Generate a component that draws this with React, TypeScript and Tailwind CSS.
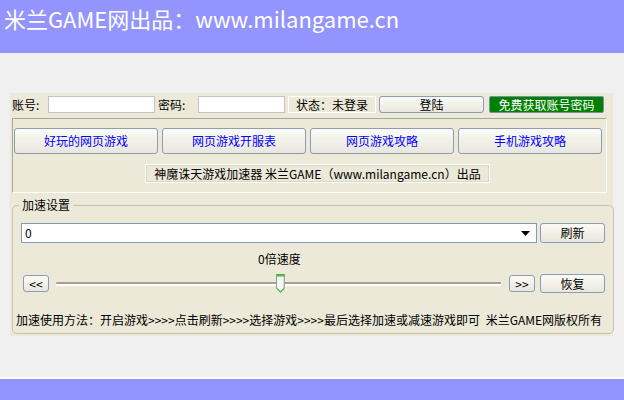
import React from 'react';

const font = { fontFamily: '"Noto Sans CJK SC", "Liberation Sans", sans-serif' };

const xpButton =
  'flex items-center justify-center rounded-[3px] border border-[#8A9CB6] bg-gradient-to-b from-[#FBFAF6] to-[#E9E7DC] text-[12px] leading-none';

const SliderThumb: React.FC = () => (
  <svg width="11" height="21" viewBox="0 0 11 21" className="shrink-0">
    <path d="M1.5 1.5 H9.5 V15 L5.5 19.5 L1.5 15 Z" fill="#F7F7F4" stroke="#8E9C8A" strokeWidth="1" />
    <rect x="1.5" y="1" width="8" height="2.5" fill="#3FBF3F" />
    <path d="M2 15.5 L5.5 19 L9 15.5" fill="none" stroke="#4CC24C" strokeWidth="1.2" />
    <line x1="9" y1="3.5" x2="9" y2="15" stroke="#B9B9A9" />
  </svg>
);

const App: React.FC = () => {
  const links = ['好玩的网页游戏', '网页游戏开服表', '网页游戏攻略', '手机游戏攻略'];

  return (
    <div className="w-[624px] h-[400px] bg-[#F0F0F0] flex flex-col overflow-hidden" style={font}>
      {/* top banner */}
      <div className="h-[53px] bg-[#9494FF] pl-[4px] pt-[3px] text-white text-[22px] leading-[30px] shrink-0">
        米兰GAME网出品：www.milangame.cn
      </div>

      {/* main panel */}
      <div className="mt-[40px] ml-[10px] w-[603px] h-[243px] bg-[#ECE9D8] text-black shrink-0">
        {/* login row */}
        <div className="flex items-center h-[17px] mt-[3px] text-[12px]">
          <span className="w-[38px] pl-[2px] leading-none">账号:</span>
          <div className="w-[107px] h-[17px] bg-white border border-[#C3C3C3]" />
          <span className="w-[43px] pl-[3px] leading-none">密码:</span>
          <div className="w-[87px] h-[17px] bg-white border border-[#C3C3C3]" />
          <div className="ml-[3px] w-[88px] h-[17px] border border-white flex items-center justify-center leading-none">
            状态：未登录
          </div>
          <div className={`${xpButton} ml-[3px] w-[105px] h-[17px]`}>登陆</div>
          <div className="ml-[5px] w-[115px] h-[17px] rounded-[2px] border border-[#7B8FA8] bg-[#008000] text-white flex items-center justify-center leading-none">
            免费获取账号密码
          </div>
        </div>

        {/* link buttons */}
        <div className="ml-[2px] mt-[5px] w-[595px] h-[75px] border border-t-[#A8A899] border-l-[#A8A899] border-r-white border-b-white">
          <div className="flex gap-[4px] mt-[9px] ml-[1px]">
            {links.map((t) => (
              <div key={t} className={`${xpButton} w-[144px] h-[26px] text-[#0000FF]`}>
                {t}
              </div>
            ))}
          </div>
          <div className="ml-[132px] mt-[10px] w-[345px] h-[19px] border border-white shadow-[inset_0_0_0_1px_#DAD7C8] flex items-center justify-center text-[12px] leading-none">
            神魔诛天游戏加速器 米兰GAME（www.milangame.cn）出品
          </div>
        </div>

        {/* speed settings */}
        <fieldset className="ml-[2px] mt-[5px] w-[595px] h-[136px] border border-[#C5C2B2] rounded-[5px] px-[8px] text-[12px]">
          <legend className="-ml-[2px] px-[3px] leading-[14px]">加速设置</legend>

          <div className="flex mt-[11px]">
            <div className="w-[516px] h-[20px] bg-white border border-[#7F9DB9] flex items-center justify-between pl-[3px] pr-[6px] leading-none">
              <span>0</span>
              <svg width="9" height="5" viewBox="0 0 9 5">
                <path d="M0 0 H9 L4.5 5 Z" fill="#000" />
              </svg>
            </div>
            <div className={`${xpButton} ml-[3px] w-[65px] h-[20px]`}>刷新</div>
          </div>

          <div className="mt-[9px] h-[14px] pl-[237px] leading-[14px]">0倍速度</div>

          <div className="flex items-center mt-[7px] h-[21px]">
            <div className={`${xpButton} ml-[2px] w-[26px] h-[17px] text-[11px]`}>&lt;&lt;</div>
            {/* track */}
            <div className="ml-[7px] w-[445px] h-[21px] flex items-center relative">
              <div className="w-full flex flex-col">
                <div className="h-[2px] bg-[#A3A393] rounded-l-[1px]" />
                <div className="h-[2px] bg-white" />
              </div>
              <div className="absolute left-[219px] top-0">
                <SliderThumb />
              </div>
            </div>
            <div className={`${xpButton} ml-[8px] w-[26px] h-[17px] text-[11px]`}>&gt;&gt;</div>
            <div className={`${xpButton} ml-[5px] w-[65px] h-[19px]`}>恢复</div>
          </div>

          <div className="flex justify-between mt-[19px] -ml-[5px] -mr-[5px] pr-[8px] leading-[14px] whitespace-nowrap">
            <span>加速使用方法：开启游戏&gt;&gt;&gt;&gt;点击刷新&gt;&gt;&gt;&gt;选择游戏&gt;&gt;&gt;&gt;最后选择加速或减速游戏即可</span>
            <span>米兰GAME网版权所有</span>
          </div>
        </fieldset>
      </div>

      {/* footer band */}
      <div className="flex-1" />
      <div className="h-[2px] bg-white shrink-0" />
      <div className="h-[21px] bg-[#9494FF] shrink-0" />
    </div>
  );
};

export default App;
